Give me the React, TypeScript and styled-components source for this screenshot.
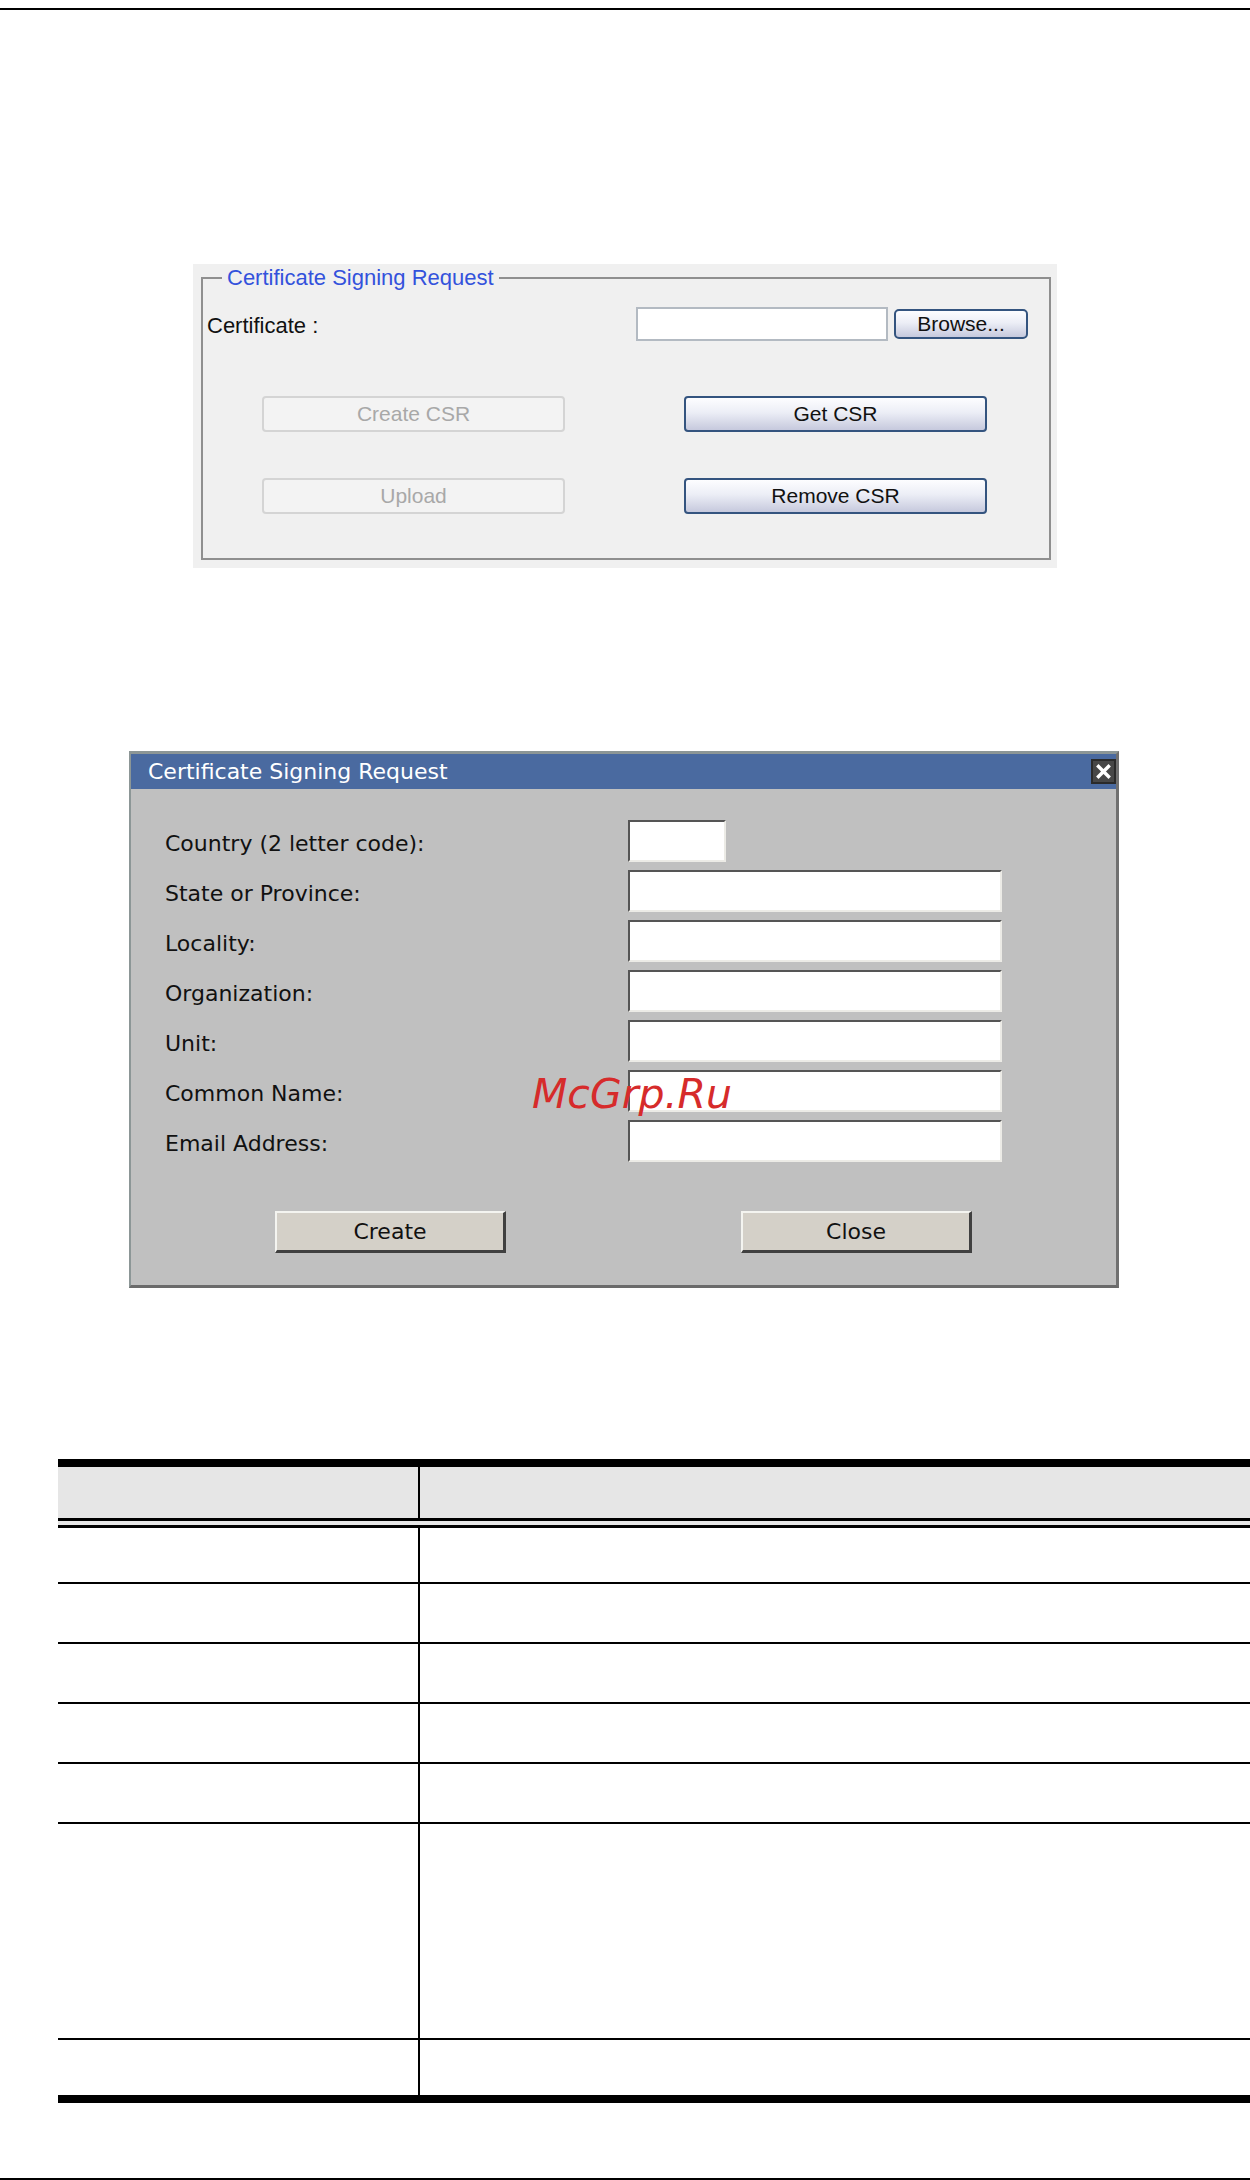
import React from "react";
import styled, { createGlobalStyle } from "styled-components";

const GlobalStyle = createGlobalStyle`
  html, body {
    margin: 0;
    padding: 0;
    background: #ffffff;
    overflow: hidden;
  }
  body {
    width: 1250px;
    font-family: "Liberation Sans", Arial, sans-serif;
  }
  * {
    box-sizing: border-box;
  }
`;

const Page = styled.div`
  width: 1250px;
  height: 2180px;
  display: flex;
  flex-direction: column;
  overflow: hidden;
`;

const Rule = styled.div<{ $top: number }>`
  width: 1250px;
  height: 2px;
  margin-top: ${(p) => p.$top}px;
  background: #000;
  flex: none;
`;

/* ---------- upper panel (web form) ---------- */

const Panel = styled.div`
  width: 864px;
  height: 304px;
  margin: 254px 0 0 193px;
  padding: 1px 6px 8px 8px;
  background: #f0f0f0;
  flex: none;
`;

const Frame = styled.fieldset`
  margin: 0;
  padding: 0 0 44px 0;
  min-width: 0;
  border: 2px solid #8f8f8f;
`;

const Legend = styled.legend`
  margin-left: 19px;
  padding: 0 5px;
  font-size: 22px;
  line-height: 26px;
  color: #3352dc;
`;

const CertRow = styled.div`
  display: flex;
  align-items: center;
  height: 34px;
  margin-top: 16px;
  padding: 0 21px 0 4px;
`;

const CertLabel = styled.span`
  flex: 1;
  padding-top: 3px;
  font-size: 22px;
  color: #111;
`;

const FileInput = styled.div`
  width: 252px;
  height: 34px;
  background: #fff;
  border: 2px solid #b3bac2;
`;

const WebButton = styled.button<{ $disabled?: boolean }>`
  height: 36px;
  padding: 0;
  font-family: "Liberation Sans", Arial, sans-serif;
  font-size: 21px;
  border-radius: 4px;
  cursor: default;
  color: ${(p) => (p.$disabled ? "#a8a8a8" : "#111")};
  border: 2px solid ${(p) => (p.$disabled ? "#d4d4d4" : "#34547f")};
  background: ${(p) =>
    p.$disabled ? "#f3f3f3" : "linear-gradient(#fdfdff 0%, #eceef6 45%, #c6c9dd 100%)"};
`;

const BrowseButton = styled(WebButton)`
  width: 134px;
  height: 30px;
  margin-left: 6px;
  border-radius: 5px;
`;

const ButtonGrid = styled.div`
  display: grid;
  grid-template-columns: 303px 303px;
  column-gap: 119px;
  row-gap: 46px;
  margin-top: 55px;
  padding-left: 59px;
`;

/* ---------- dialog ---------- */

const Dialog = styled.div`
  position: relative;
  width: 990px;
  margin: 183px 0 0 129px;
  background: #c0c0c0;
  border-top: 3px solid #8c9696;
  border-left: 2px solid #8c9696;
  border-right: 3px solid #707070;
  border-bottom: 3px solid #6a6a6a;
  font-family: "DejaVu Sans", Verdana, sans-serif;
  flex: none;
`;

const TitleBar = styled.div`
  height: 35px;
  display: flex;
  align-items: center;
  justify-content: space-between;
  padding: 0 0 0 17px;
  background: #4a6aa0;
  color: #fff;
  font-size: 22px;
  line-height: 35px;
`;

const CloseBox = styled.div`
  width: 25px;
  height: 25px;
  display: flex;
  align-items: center;
  justify-content: center;
  background: #474747;
  border: 2px solid #2a2a2a;
`;

const DialogBody = styled.div`
  padding: 31px 0 32px 34px;
`;

const FieldGrid = styled.div`
  display: grid;
  grid-template-columns: 463px auto;
  row-gap: 8px;
`;

const FieldLabel = styled.div`
  height: 42px;
  display: flex;
  align-items: center;
  padding-top: 5px;
  font-size: 22px;
  color: #111;
`;

const TextBox = styled.div<{ $w: number }>`
  width: ${(p) => p.$w}px;
  height: 42px;
  background: #fff;
  border-style: solid;
  border-width: 2px;
  border-color: #555 #ecebe6 #ecebe6 #555;
`;

const DialogActions = styled.div`
  display: flex;
  justify-content: center;
  gap: 235px;
  margin: 49px 0 0 -34px;
`;

const ClassicButton = styled.button`
  width: 231px;
  height: 42px;
  padding: 0;
  background: #d4d0c8;
  font-family: "DejaVu Sans", Verdana, sans-serif;
  font-size: 22px;
  color: #111;
  border-style: solid;
  border-width: 2px 3px 3px 2px;
  border-color: #f4f4f0 #404040 #404040 #f4f4f0;
`;

const Watermark = styled.span`
  position: absolute;
  left: 401px;
  top: 320px;
  font-family: "DejaVu Sans", sans-serif;
  font-style: italic;
  font-size: 41px;
  line-height: 41px;
  color: #d62b2b;
  white-space: nowrap;
`;

/* ---------- table ---------- */

const Table = styled.div`
  width: 1192px;
  margin: 171px 0 0 58px;
  border-top: 8px solid #000;
  border-bottom: 8px solid #000;
  flex: none;
`;

const Row = styled.div<{ $h: number; $head?: boolean; $last?: boolean }>`
  display: grid;
  grid-template-columns: 360px 1fr;
  height: ${(p) => p.$h}px;
  background: ${(p) => (p.$head ? "#e6e6e6" : "transparent")};
  border-bottom: ${(p) =>
    p.$head ? "10px double #000" : p.$last ? "none" : "2px solid #000"};
`;

const Cell = styled.div<{ $right?: boolean }>`
  border-left: ${(p) => (p.$right ? "2px solid #000" : "none")};
`;

const fields = [
  { label: "Country (2 letter code):", w: 98 },
  { label: "State or Province:", w: 374 },
  { label: "Locality:", w: 374 },
  { label: "Organization:", w: 374 },
  { label: "Unit:", w: 374 },
  { label: "Common Name:", w: 374 },
  { label: "Email Address:", w: 374 },
];

const rowHeights = [56, 60, 60, 60, 60, 216, 55];

function App() {
  return (
    <Page>
      <GlobalStyle />
      <Rule $top={8} />

      <Panel>
        <Frame>
          <Legend>Certificate Signing Request</Legend>
          <CertRow>
            <CertLabel>Certificate :</CertLabel>
            <FileInput />
            <BrowseButton>Browse...</BrowseButton>
          </CertRow>
          <ButtonGrid>
            <WebButton $disabled>Create CSR</WebButton>
            <WebButton>Get CSR</WebButton>
            <WebButton $disabled>Upload</WebButton>
            <WebButton>Remove CSR</WebButton>
          </ButtonGrid>
        </Frame>
      </Panel>

      <Dialog>
        <TitleBar>
          <span>Certificate Signing Request</span>
          <CloseBox>
            <svg width="15" height="15" viewBox="0 0 15 15">
              <path d="M2.5 2.5 L12.5 12.5 M12.5 2.5 L2.5 12.5" stroke="#fff" strokeWidth="3.4" strokeLinecap="square" />
            </svg>
          </CloseBox>
        </TitleBar>
        <DialogBody>
          <FieldGrid>
            {fields.map((f) => (
              <React.Fragment key={f.label}>
                <FieldLabel>{f.label}</FieldLabel>
                <TextBox $w={f.w} />
              </React.Fragment>
            ))}
          </FieldGrid>
          <DialogActions>
            <ClassicButton>Create</ClassicButton>
            <ClassicButton>Close</ClassicButton>
          </DialogActions>
        </DialogBody>
        <Watermark>McGrp.Ru</Watermark>
      </Dialog>

      <Table>
        <Row $h={61} $head>
          <Cell />
          <Cell $right />
        </Row>
        {rowHeights.map((h, i) => (
          <Row key={i} $h={h} $last={i === rowHeights.length - 1}>
            <Cell />
            <Cell $right />
          </Row>
        ))}
      </Table>

      <Rule $top={75} />
    </Page>
  );
}

export default App;
